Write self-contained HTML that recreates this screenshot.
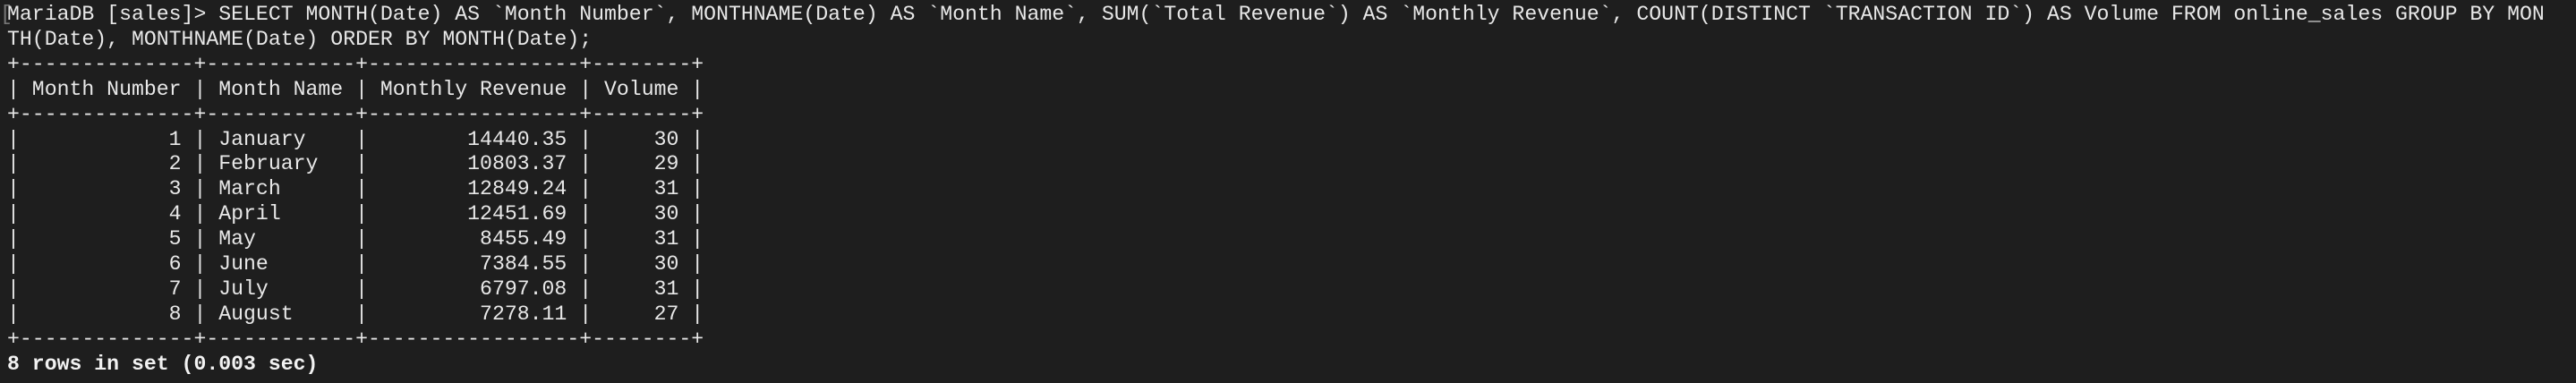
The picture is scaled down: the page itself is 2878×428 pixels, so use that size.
<!DOCTYPE html>
<html><head><meta charset="utf-8"><style>
html,body{margin:0;padding:0;background:#1e1e1e;width:2878px;height:428px;overflow:hidden}
pre{margin:0;position:absolute;left:8px;top:3px;font-family:"Liberation Mono",monospace;font-size:23.17px;line-height:27.9px;color:#e8e8e8;white-space:pre}
b{font-weight:bold;color:#f2f2f2}
.cur{position:absolute;left:0;top:3px;font-family:"Liberation Mono",monospace;font-size:23.17px;line-height:27.9px;color:#777}
</style></head><body>
<div class="cur">[</div>
<pre>MariaDB [sales]&gt; SELECT MONTH(Date) AS `Month Number`, MONTHNAME(Date) AS `Month Name`, SUM(`Total Revenue`) AS `Monthly Revenue`, COUNT(DISTINCT `TRANSACTION ID`) AS Volume FROM online_sales GROUP BY MON
TH(Date), MONTHNAME(Date) ORDER BY MONTH(Date);
+--------------+------------+-----------------+--------+
| Month Number | Month Name | Monthly Revenue | Volume |
+--------------+------------+-----------------+--------+
|            1 | January    |        14440.35 |     30 |
|            2 | February   |        10803.37 |     29 |
|            3 | March      |        12849.24 |     31 |
|            4 | April      |        12451.69 |     30 |
|            5 | May        |         8455.49 |     31 |
|            6 | June       |         7384.55 |     30 |
|            7 | July       |         6797.08 |     31 |
|            8 | August     |         7278.11 |     27 |
+--------------+------------+-----------------+--------+
<b>8 rows in set (0.003 sec)</b></pre>
</body></html>
